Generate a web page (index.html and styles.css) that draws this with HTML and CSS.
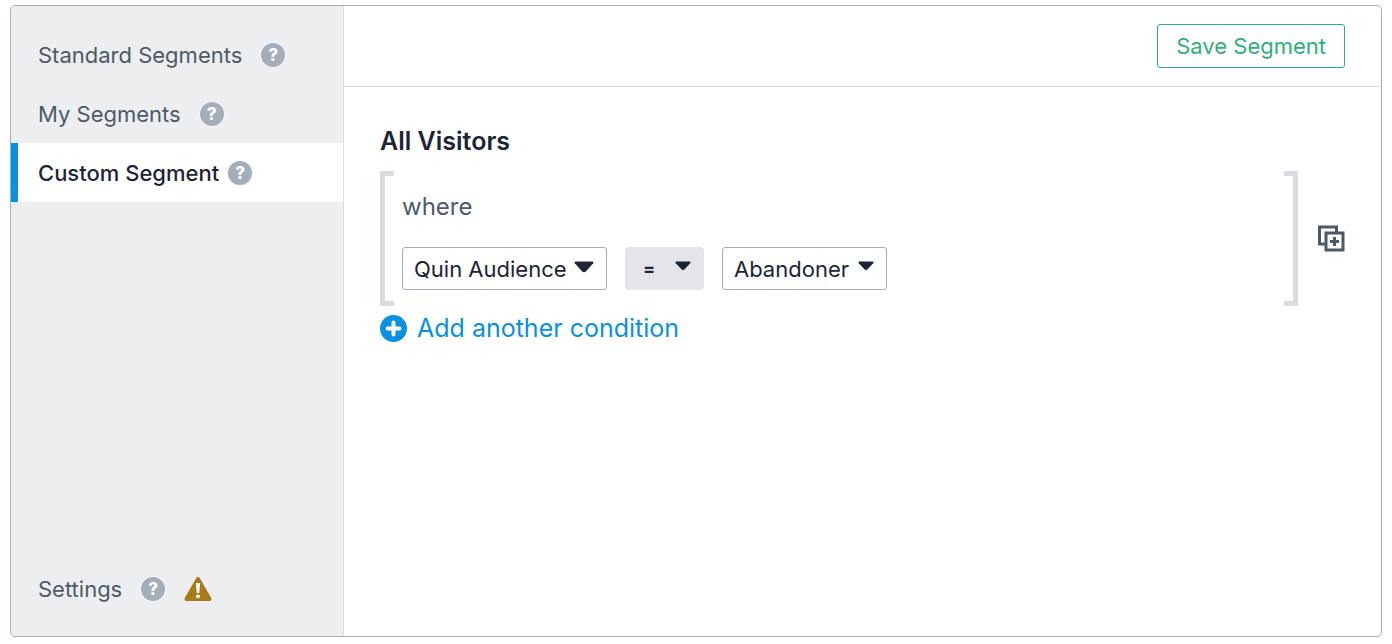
FILE: index.html
```html
<!DOCTYPE html>
<html lang="en">

<head>
    <meta charset="UTF-8">
    <meta name="viewport" content="width=device-width, initial-scale=1.0">
    <title>Custom Segment</title>
    <link rel="stylesheet" href="styles.css">
</head>

<body>
    <div class="panel">
        <nav class="sidebar">
            <div class="item">
                <a href="#">Standard Segments</a>
                <button class="help">?</button>
            </div>
            <div class="item">
                <a href="#">My Segments</a>
                <button class="help">?</button>
            </div>
            <div class="item active">
                <a href="#">Custom Segment</a>
                <button class="help">?</button>
            </div>
            <div class="item settings">
                <a href="#">Settings</a>
                <button class="help">?</button>
                <svg class="warning" width="28" height="26" viewBox="0 0 28 26">
                    <path d="M14 3 L25.500 23 H2.500 Z" fill="#a87b18" stroke="#a87b18" stroke-width="4" stroke-linejoin="round" />
                    <path d="M12 7 H16 L15.300 17 H12.700 Z" fill="#fff" />
                    <circle cx="14" cy="20.300" r="1.900" fill="#fff" />
                </svg>
            </div>
        </nav>
        <main class="main">
            <header class="top">
                <button class="save">Save Segment</button>
            </header>
            <div class="content">
                <h1>All Visitors</h1>
                <div class="group">
                    <div class="bracket left"></div>
                    <div class="conditions">
                        <p>where</p>
                        <div class="row">
                            <div class="drop field">
                                <select aria-label="Field">
                                    <option>Quin Audience</option>
                                </select>
                                <svg width="20" height="12" viewBox="0 0 20 12">
                                    <path d="M2 0.500 H18 Q20.500 0.500 19 2.500 L12 10.200 Q10 12.200 8 10.200 L1 2.500 Q-0.500 0.500 2 0.500 Z" fill="#1d2433" />
                                </svg>
                            </div>
                            <div class="drop operator">
                                <select aria-label="Operator">
                                    <option>=</option>
                                </select>
                                <svg width="16" height="10" viewBox="0 0 20 12">
                                    <path d="M2 0.500 H18 Q20.500 0.500 19 2.500 L12 10.200 Q10 12.200 8 10.200 L1 2.500 Q-0.500 0.500 2 0.500 Z" fill="#1d2433" />
                                </svg>
                            </div>
                            <div class="drop value">
                                <select aria-label="Value">
                                    <option>Abandoner</option>
                                </select>
                                <svg width="16" height="10" viewBox="0 0 20 12">
                                    <path d="M2 0.500 H18 Q20.500 0.500 19 2.500 L12 10.200 Q10 12.200 8 10.200 L1 2.500 Q-0.500 0.500 2 0.500 Z" fill="#1d2433" />
                                </svg>
                            </div>
                        </div>
                    </div>
                    <div class="bracket right"></div>
                    <button class="copy" aria-label="Duplicate">
                        <svg width="28" height="28" viewBox="0 0 28 28" fill="none" stroke="#4d5a66" stroke-width="3">
                            <path d="M8 19 H2.500 V2 H19.500 V7" />
                            <rect x="9" y="8" width="17" height="17" />
                            <path d="M17.500 12 V21 M13 16.500 H22" />
                        </svg>
                    </button>
                </div>
                <button class="add">
                    <svg width="27" height="27" viewBox="0 0 27 27">
                        <circle cx="13.500" cy="13.500" r="13.500" fill="#0990e1" />
                        <path d="M13.500 7.500 V19.500 M7.500 13.500 H19.500" stroke="#fff" stroke-width="4" stroke-linecap="round" />
                    </svg>
                    Add another condition
                </button>
            </div>
        </main>
    </div>
</body>

</html>
```

FILE: styles.css
```css
* {
    margin: 0;
    padding: 0;
    box-sizing: border-box;
    font-family: Inter, sans-serif;
}

body {
    background-color: #fff;
    color: #1d2433;
}

button {
    border: none;
    background: none;
    cursor: pointer;
}

.panel {
    display: flex;
    min-height: calc(100vh - 12px);
    margin: 5px 10px 7px;
    border: 1px solid #a3aeba;
    border-radius: 5px;
    overflow: hidden;
}

/* sidebar */
.sidebar {
    display: flex;
    flex-direction: column;
    flex: 0 0 333px;
    padding: 19px 0 18px;
    background-color: #edeef0;
    border-right: 1px solid #d9dce0;
}

.item {
    display: flex;
    align-items: center;
    gap: 19px;
    height: 59px;
    padding-left: 27px;
}

.item a {
    font-size: 22px;
    color: #4d5a66;
    text-decoration: none;
}

.active {
    gap: 9px;
    padding-left: 20px;
    background-color: #fff;
    border-left: 7px solid #0990e1;
}

.active a {
    font-weight: 500;
    color: #1d2433;
}

.settings {
    margin-top: auto;
}

.help {
    width: 24px;
    height: 24px;
    border-radius: 50%;
    background-color: #a3aeba;
    box-shadow: 0 0 0 1px #f6f7f8;
    color: #fff;
    font-size: 17px;
    font-weight: 800;
    line-height: 24px;
}

/* main area */
.main {
    flex: 1;
}

.top {
    display: flex;
    justify-content: flex-end;
    padding: 18px 36px;
    border-bottom: 1px solid #d9dce0;
}

.save {
    height: 44px;
    padding: 0 18px;
    border: 1px solid #2eb079;
    border-radius: 3px;
    color: #2eb079;
    font-size: 22px;
    font-weight: 400;
}

.content {
    padding: 38px 36px;
}

h1 {
    margin-bottom: 14px;
    font-size: 25px;
    font-weight: 600;
    line-height: 32px;
}

.group {
    display: flex;
    align-items: center;
}

.bracket {
    align-self: stretch;
    width: 14px;
    border: 5px solid #d9dce0;
}

.left {
    border-right: none;
}

.right {
    border-left: none;
}

.conditions {
    flex: 1;
    padding: 20px 8px 16px;
}

.conditions p {
    margin-bottom: 24px;
    font-size: 24px;
    line-height: 32px;
    color: #4d5a66;
}

.row {
    display: flex;
    gap: 18px;
}

.drop {
    position: relative;
}

.drop select {
    display: block;
    width: 100%;
    height: 43px;
    padding: 0 11px;
    appearance: none;
    background-color: #fff;
    border: 1px solid #a3aeba;
    border-radius: 3px;
    color: #1d2433;
    font-size: 22px;
    font-weight: 400;
}

.drop svg {
    position: absolute;
    top: 14px;
    right: 13px;
    pointer-events: none;
}

.field {
    width: 205px;
}

.operator {
    width: 79px;
}

.value {
    width: 165px;
}

.drop.operator select {
    padding: 0 17px;
    background-color: #e4e5e9;
    border-color: #e4e5e9;
    font-size: 18px;
    font-weight: 700;
}

.copy {
    margin-left: 19px;
    height: 28px;
}

.add {
    display: flex;
    align-items: center;
    gap: 10px;
    margin-top: 6px;
    color: #0990e1;
    font-size: 25px;
    line-height: 32px;
}
```
